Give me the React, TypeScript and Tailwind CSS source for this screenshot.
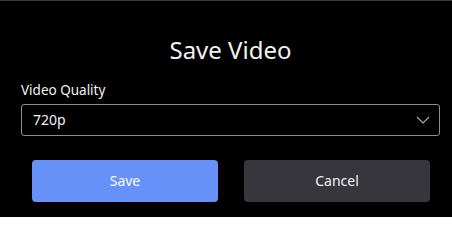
import React from "react";

const App: React.FC = () => {
  return (
    <div
      className="w-[452px] h-[217px] bg-black border-t border-[#3c3c3c] overflow-hidden text-white pl-[21px] pr-[12px]"
      style={{ fontFamily: '"Noto Sans", "Open Sans", sans-serif' }}
    >
      <h1 className="mt-[33px] text-center text-[24px] leading-[32px] font-normal text-[#f2f2f2]">
        Save Video
      </h1>
      <label className="block mt-[14px] text-[13.5px] leading-[20px] text-[#f2f2f2]">
        Video Quality
      </label>
      <div className="mt-[4px] h-[32px] flex items-center justify-between border border-[#8f8f8f] rounded-[3px] pl-[11px] pr-[8px]">
        <span className="text-[14px] leading-[20px] text-[#f2f2f2]">720p</span>
        <svg
          width="14"
          height="8"
          viewBox="0 0 14 8"
          fill="none"
          stroke="#a8a8a8"
          strokeWidth="1.2"
          className="mr-[1px]"
        >
          <path d="M1 1l6 6 6-6" />
        </svg>
      </div>
      <div className="mt-[24px] grid grid-cols-2 gap-[26px] pl-[11px] pr-[10px]">
        <button className="h-[42px] rounded-[4px] bg-[#6691f8] text-[14px] leading-[20px] text-white">
          Save
        </button>
        <button className="h-[42px] rounded-[4px] bg-[#37363c] text-[14px] leading-[20px] text-[#f2f2f2]">
          Cancel
        </button>
      </div>
    </div>
  );
};

export default App;
